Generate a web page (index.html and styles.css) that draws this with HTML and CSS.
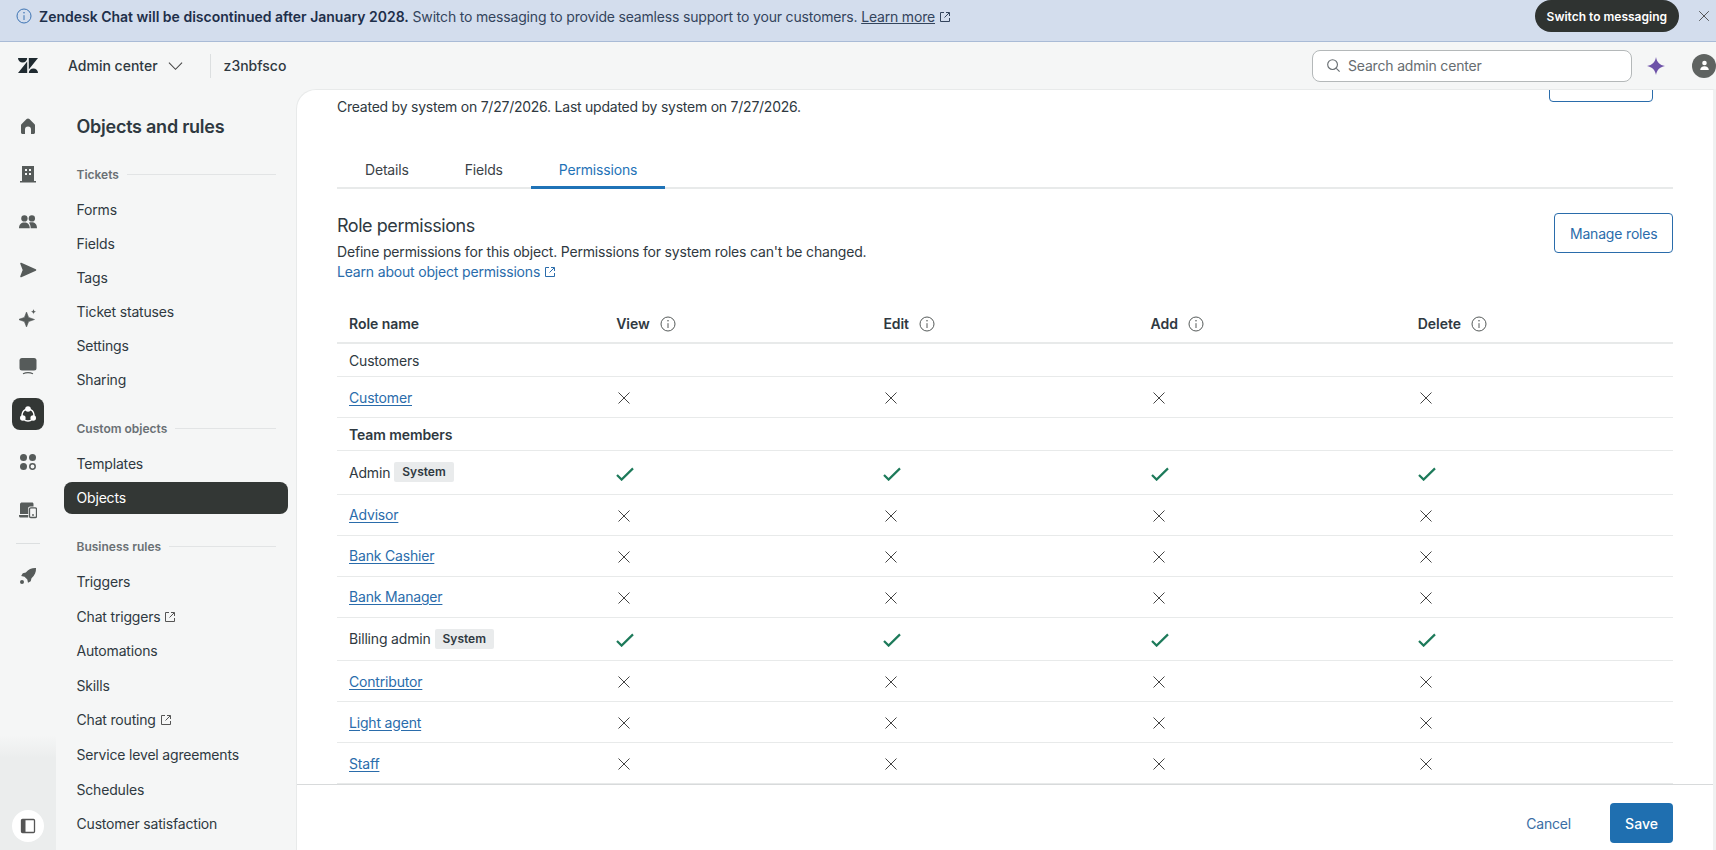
FILE: index.html
```html
<!DOCTYPE html>
<html lang="en">
<head>
  <meta charset="UTF-8" />
  <title>Objects and rules - Admin center</title>
  <link rel="stylesheet" href="styles.css">
</head>
<body>
  <svg class="sprite" aria-hidden="true">
    <symbol id="i-x" viewBox="0 0 16 16"><path d="M2.5 2.5l11 11M13.5 2.5l-11 11" fill="none" stroke="currentColor" stroke-width="1"/></symbol>
    <symbol id="i-check" viewBox="0 0 18 14"><path d="M1 8l4.6 4.6L17 1.4" fill="none" stroke="currentColor" stroke-width="2.2"/></symbol>
    <symbol id="i-info" viewBox="0 0 16 16"><circle cx="8" cy="8" r="7" fill="none" stroke="currentColor" stroke-width="1"/><path d="M8 7.2V12" stroke="currentColor" stroke-width="1"/><circle cx="8" cy="4.7" r=".8" fill="currentColor"/></symbol>
    <symbol id="i-ext" viewBox="0 0 12 12"><path d="M5 1.5H1.5v9h9V7M7 1.5h3.5V5M10.2 1.8L5.5 6.5" fill="none" stroke="currentColor" stroke-width="1"/></symbol>
  </svg>

  <div class="banner">
    <svg class="banner-info"><use href="#i-info"/></svg>
    <div class="banner-text"><b>Zendesk Chat will be discontinued after January 2028.</b> Switch to messaging to provide seamless support to your customers. <a href="#">Learn more</a> <svg class="ext"><use href="#i-ext"/></svg></div>
    <button class="switch-button">Switch to messaging</button>
    <svg class="banner-close"><use href="#i-x"/></svg>
  </div>

  <header class="topbar">
    <svg class="logo" viewBox="0 0 20 15"><path d="M0 0h9.2a4.6 4.6 0 0 1-9.2 0zM9.2 3.6V15H0zM10.8 0H20l-9.2 11.4zM10.8 15a4.6 4.6 0 0 1 9.2 0z"/></svg>
    <span class="product">Admin center</span>
    <svg class="chevron" viewBox="0 0 16 10"><path d="M1 1.5l7 7 7-7" fill="none" stroke="currentColor" stroke-width="1.1"/></svg>
    <span class="top-divider"></span>
    <span class="subdomain">z3nbfsco</span>
    <div class="search">
      <svg viewBox="0 0 16 16"><circle cx="7" cy="7" r="5.2" fill="none" stroke="currentColor" stroke-width="1.2"/><path d="M11 11l3.5 3.5" stroke="currentColor" stroke-width="1.2"/></svg>
      <span>Search admin center</span>
    </div>
    <svg class="spark" viewBox="0 0 18 18"><path d="M9 0c.8 5 3.6 8 9 9-5.4 1-8.2 4-9 9-.8-5-3.6-8-9-9 5.4-1 8.2-4 9-9z"/></svg>
    <span class="avatar"><svg viewBox="0 0 12 12"><circle cx="6" cy="3.3" r="2.5"/><path d="M1.3 11c0-3 2-4.3 4.7-4.3s4.700 1.300 4.700 4.300z"/></svg></span>
  </header>

  <div class="body">
    <nav class="rail">
      <a class="rail-item"><svg viewBox="0 0 18 18"><path d="M9 1.5c.5 0 1 .2 1.400.6l5.200 5.200c.3.300.4.700.4 1.100v7c0 .8-.7 1.600-1.500 1.600h-2.500v-4.500a3 3 0 0 0-6 0V17H3.500C2.700 17 2 16.200 2 15.400v-7c0-.4.100-.8.400-1.100l5.200-5.200c.4-.4.900-.6 1.400-.6z"/></svg></a>
      <a class="rail-item"><svg viewBox="0 0 18 18"><path fill-rule="evenodd" d="M3 1h12v15h2v1.500H1V16h2zM6 4v2h2V4zm4 0v2h2V4zM6 8v2h2V8zm4 0v2h2V8z"/></svg></a>
      <a class="rail-item"><svg viewBox="0 0 20 18"><circle cx="6" cy="5" r="3.5"/><circle cx="14.3" cy="5" r="3.5"/><path d="M0 16c0-4.500 2.500-6.500 6-6.500s6 2 6 6.500zM13 16c0-2.500-.6-4.700-2-6.200 1-.3 2-.4 3-.4 3.500 0 6 2 6 6.600z"/></svg></a>
      <a class="rail-item"><svg viewBox="0 0 18 18"><path d="M2 2.5L16.500 9 2 15.500 4.500 9z" stroke="currentColor" stroke-width="1.6" stroke-linejoin="round"/></svg></a>
      <a class="rail-item"><svg viewBox="0 0 18 18"><path d="M7.500 3l2.100 5.400L15.500 10.500 9.600 12.600 7.500 18 5.400 12.600-.5 10.500l5.900-2.100z" stroke="currentColor" stroke-width=".6" stroke-linejoin="round"/><path d="M14.500 0c.2 1.700 1 2.500 2.700 2.700-1.700.2-2.500 1-2.700 2.700-.2-1.700-1-2.500-2.700-2.700 1.700-.2 2.500-1 2.700-2.700z"/></svg></a>
      <a class="rail-item"><svg viewBox="0 0 18 18"><rect x="0.5" y="1" width="17" height="12.5" rx="2.5"/><path d="M4 16.800c3-1.300 7-1.300 10 0" fill="none" stroke="currentColor" stroke-width="1.2"/></svg></a>
      <a class="rail-item rail-active"><svg viewBox="0 0 18 18"><circle cx="9" cy="10" r="6" fill="none" stroke="currentColor" stroke-width="1.5"/><circle cx="9" cy="4" r="2.8"/><circle cx="3.8" cy="13" r="2.8"/><circle cx="14.2" cy="13" r="2.8"/></svg></a>
      <a class="rail-item"><svg viewBox="0 0 18 18"><circle cx="4.5" cy="4.5" r="3.5"/><circle cx="13.5" cy="4.5" r="3.5"/><circle cx="4.5" cy="13.5" r="3.5"/><circle cx="13.5" cy="13.5" r="2.7" fill="none" stroke="currentColor" stroke-width="1.5"/></svg></a>
      <a class="rail-item"><svg viewBox="0 0 18 18"><path d="M3 1.500h10c1 0 1.500.6 1.500 1.500v2.500H11c-1 0-1.800.8-1.800 1.800V13H1V3c.1-.9 1-1.500 2-1.500zM0 14h9.200v2.500H1.500C.6 16.500 0 15.800 0 15z"/><rect x="10.5" y="6.8" width="7" height="9.7" rx="1.3" fill="none" stroke="currentColor" stroke-width="1.3"/><circle cx="14" cy="14" r=".9"/></svg></a>
      <span class="rail-divider"></span>
      <a class="rail-item"><svg viewBox="0 0 18 18"><path d="M17 1c.2 4-1.200 7.500-4.500 10.200l-.8 3-2.700 1.600-.7-3.300-2.800-2.800-3.300-.6L3.800 6.300l3-.8C9.500 2.200 13 .8 17 1z"/><circle cx="3" cy="15" r="2"/></svg></a>
      <div class="rail-bottom">
        <span class="rail-toggle"><svg viewBox="0 0 16 16"><path d="M2.500 1.500h11a1 1 0 0 1 1 1v11a1 1 0 0 1-1 1h-11a1 1 0 0 1-1-1v-11a1 1 0 0 1 1-1z" fill="none" stroke="currentColor" stroke-width="1.3"/><path d="M1.500 2h4v12h-4z"/></svg></span>
      </div>
    </nav>

    <aside class="sidebar">
      <h2>Objects and rules</h2>
      <div class="nav-section">Tickets</div>
      <a class="nav-item">Forms</a>
      <a class="nav-item">Fields</a>
      <a class="nav-item">Tags</a>
      <a class="nav-item">Ticket statuses</a>
      <a class="nav-item">Settings</a>
      <a class="nav-item">Sharing</a>
      <div class="nav-section">Custom objects</div>
      <a class="nav-item">Templates</a>
      <a class="nav-item active">Objects</a>
      <div class="nav-section wide">Business rules</div>
      <a class="nav-item">Triggers</a>
      <a class="nav-item">Chat triggers <svg class="ext"><use href="#i-ext"/></svg></a>
      <a class="nav-item">Automations</a>
      <a class="nav-item">Skills</a>
      <a class="nav-item">Chat routing <svg class="ext"><use href="#i-ext"/></svg></a>
      <a class="nav-item">Service level agreements</a>
      <a class="nav-item">Schedules</a>
      <a class="nav-item">Customer satisfaction</a>
    </aside>

    <main class="panel">
      <div class="scroll">
        <div class="scroll-inner">
          <div class="meta">
            <button class="outline-button ghost"></button>
            <p>Created by system on 7/27/2026. Last updated by system on 7/27/2026.</p>
          </div>
          <div class="tabs">
            <span class="tab">Details</span>
            <span class="tab">Fields</span>
            <span class="tab selected">Permissions</span>
          </div>
          <div class="section-head">
            <div>
              <h3>Role permissions</h3>
              <p>Define permissions for this object. Permissions for system roles can't be changed.</p>
              <a href="#" class="plain-link">Learn about object permissions <svg class="ext"><use href="#i-ext"/></svg></a>
            </div>
            <button class="outline-button">Manage roles</button>
          </div>

          <div class="table">
            <div class="row head">
              <div>Role name</div>
              <div>View <svg class="info"><use href="#i-info"/></svg></div>
              <div>Edit <svg class="info"><use href="#i-info"/></svg></div>
              <div>Add <svg class="info"><use href="#i-info"/></svg></div>
              <div>Delete <svg class="info"><use href="#i-info"/></svg></div>
            </div>
            <div class="row group"><div>Customers</div></div>
            <div class="row">
              <div><a href="#">Customer</a></div>
              <div><svg class="no"><use href="#i-x"/></svg></div><div><svg class="no"><use href="#i-x"/></svg></div><div><svg class="no"><use href="#i-x"/></svg></div><div><svg class="no"><use href="#i-x"/></svg></div>
            </div>
            <div class="row group"><div><b>Team members</b></div></div>
            <div class="row tall">
              <div>Admin <span class="badge">System</span></div>
              <div><svg class="yes"><use href="#i-check"/></svg></div><div><svg class="yes"><use href="#i-check"/></svg></div><div><svg class="yes"><use href="#i-check"/></svg></div><div><svg class="yes"><use href="#i-check"/></svg></div>
            </div>
            <div class="row">
              <div><a href="#">Advisor</a></div>
              <div><svg class="no"><use href="#i-x"/></svg></div><div><svg class="no"><use href="#i-x"/></svg></div><div><svg class="no"><use href="#i-x"/></svg></div><div><svg class="no"><use href="#i-x"/></svg></div>
            </div>
            <div class="row">
              <div><a href="#">Bank Cashier</a></div>
              <div><svg class="no"><use href="#i-x"/></svg></div><div><svg class="no"><use href="#i-x"/></svg></div><div><svg class="no"><use href="#i-x"/></svg></div><div><svg class="no"><use href="#i-x"/></svg></div>
            </div>
            <div class="row">
              <div><a href="#">Bank Manager</a></div>
              <div><svg class="no"><use href="#i-x"/></svg></div><div><svg class="no"><use href="#i-x"/></svg></div><div><svg class="no"><use href="#i-x"/></svg></div><div><svg class="no"><use href="#i-x"/></svg></div>
            </div>
            <div class="row tall">
              <div>Billing admin <span class="badge">System</span></div>
              <div><svg class="yes"><use href="#i-check"/></svg></div><div><svg class="yes"><use href="#i-check"/></svg></div><div><svg class="yes"><use href="#i-check"/></svg></div><div><svg class="yes"><use href="#i-check"/></svg></div>
            </div>
            <div class="row">
              <div><a href="#">Contributor</a></div>
              <div><svg class="no"><use href="#i-x"/></svg></div><div><svg class="no"><use href="#i-x"/></svg></div><div><svg class="no"><use href="#i-x"/></svg></div><div><svg class="no"><use href="#i-x"/></svg></div>
            </div>
            <div class="row">
              <div><a href="#">Light agent</a></div>
              <div><svg class="no"><use href="#i-x"/></svg></div><div><svg class="no"><use href="#i-x"/></svg></div><div><svg class="no"><use href="#i-x"/></svg></div><div><svg class="no"><use href="#i-x"/></svg></div>
            </div>
            <div class="row">
              <div><a href="#">Staff</a></div>
              <div><svg class="no"><use href="#i-x"/></svg></div><div><svg class="no"><use href="#i-x"/></svg></div><div><svg class="no"><use href="#i-x"/></svg></div><div><svg class="no"><use href="#i-x"/></svg></div>
            </div>
          </div>
        </div>
      </div>
      <footer class="footer">
        <a class="cancel">Cancel</a>
        <button class="save-button">Save</button>
      </footer>
    </main>
  </div>
</body>
</html>
```
FILE: styles.css
```css
* { box-sizing: border-box; }
body {
  margin: 0;
  height: 850px;
  overflow: hidden;
  display: flex;
  flex-direction: column;
  font-family: Inter, 'Noto Sans', sans-serif;
  font-size: 14px;
  letter-spacing: -0.18px;
  color: #2f3941;
  background: #f5f6f6;
}
a { color: #2a6cab; }
svg { display: inline-block; }
.sprite { display: none; }
.ext {
  width: 12px;
  height: 12px;
  vertical-align: -1px;
}

/* banner */
.banner {
  height: 42px;
  flex: none;
  display: flex;
  align-items: center;
  padding: 0 5px 9px 16px;
  background: #d3dded;
  border-bottom: 1px solid #a9bbd6;
  color: #33445c;
}
.banner-info {
  width: 16px;
  height: 16px;
  color: #3d74b4;
  margin-right: 7px;
}
.banner-text { flex: 1; }
.banner-text b { color: #1e2f4a; font-weight: 600; letter-spacing: 0; }
.banner-text a { color: inherit; }
.switch-button {
  height: 32px;
  padding: 0 12px;
  border: none;
  border-radius: 16px;
  background: #2f3331;
  color: #fff;
  font: 600 12px Inter, sans-serif;
}
.banner-close {
  width: 14px;
  height: 14px;
  margin-left: 18px;
  color: #444;
}

/* top bar */
.topbar {
  height: 47px;
  flex: none;
  display: flex;
  align-items: center;
  background: #f5f6f6;
}
.logo {
  width: 20px;
  height: 15px;
  margin-left: 18px;
  fill: #1f2a30;
}
.product {
  margin-left: 30px;
  font-weight: 500;
  letter-spacing: 0;
}
.chevron {
  width: 15px;
  height: 10px;
  margin-left: 10px;
  color: #444;
}
.top-divider {
  width: 1px;
  height: 24px;
  margin: 0 13px 0 27px;
  background: #dcdfe0;
}
.subdomain { font-weight: 500; letter-spacing: 0; }
.search {
  margin-left: auto;
  width: 320px;
  height: 32px;
  display: flex;
  align-items: center;
  gap: 7px;
  padding: 0 13px;
  background: #fff;
  border: 1px solid #b4b8b9;
  border-radius: 8px;
  color: #666c70;
}
.search svg { width: 15px; height: 15px; }
.spark {
  width: 18px;
  height: 18px;
  margin-left: 15px;
  fill: #6d52a8;
}
.avatar {
  width: 24px;
  height: 24px;
  margin-left: 27px;
  display: flex;
  align-items: center;
  justify-content: center;
  border-radius: 50%;
  background: #5f6361;
}
.avatar svg { width: 11px; height: 11px; fill: #fff; }

/* left rail */
.body {
  flex: 1;
  display: flex;
  min-height: 0;
}
.rail {
  width: 56px;
  flex: none;
  position: relative;
  display: flex;
  flex-direction: column;
  align-items: center;
  padding-top: 21px;
  color: #565b5a;
}
.rail-item {
  width: 32px;
  height: 32px;
  margin-bottom: 16px;
  display: flex;
  align-items: center;
  justify-content: center;
  color: inherit;
}
.rail-item svg {
  width: 18px;
  height: 18px;
  fill: currentColor;
}
.rail-active {
  background: #333735;
  border-radius: 8px;
  color: #fff;
}
.rail-divider {
  width: 24px;
  height: 1px;
  margin: 1px 0 16px;
  background: #dcdfe0;
}
.rail-bottom {
  position: absolute;
  left: 0;
  right: 0;
  bottom: 0;
  height: 115px;
  display: flex;
  align-items: flex-end;
  justify-content: center;
  padding-bottom: 8px;
  background: linear-gradient(#f5f6f6, #ebeded 20%);
}
.rail-toggle {
  width: 32px;
  height: 32px;
  display: flex;
  align-items: center;
  justify-content: center;
  border-radius: 50%;
  background: #fff;
  color: #555;
}
.rail-toggle svg { width: 16px; height: 16px; fill: currentColor; }

/* object nav */
.sidebar {
  width: 240px;
  flex: none;
  padding: 0 8px;
}
.sidebar h2 {
  margin: 27px 0 27px 12.5px;
  font-size: 18px;
  line-height: 22px;
  font-weight: 600;
  letter-spacing: -0.25px;
}
.nav-section {
  display: flex;
  align-items: center;
  gap: 8px;
  height: 18px;
  margin: 23px 0 11px 12.5px;
  font-size: 12px;
  font-weight: 600;
  color: #6a7074;
  letter-spacing: 0;
}
.sidebar h2 + .nav-section { margin-top: 0; }
.nav-section::after {
  content: '';
  flex: 1;
  height: 1px;
  background: #e2e4e5;
  margin-right: 12px;
}
.nav-item {
  display: block;
  height: 32px;
  margin-bottom: 2px;
  padding-left: 12.5px;
  line-height: 32px;
  color: #2f3941;
  border-radius: 8px;
}
.nav-section.wide ~ .nav-item { margin-bottom: 2.6px; }
.nav-item.active {
  background: #333735;
  color: #fff;
}
.nav-item .ext { color: #555; }

/* main panel */
.panel {
  flex: 1;
  min-width: 0;
  display: flex;
  flex-direction: column;
  background: #fff;
  border-top-left-radius: 20px;
  border-top: 1px solid #e8eaea;
  border-left: 1px solid #e8eaea;
  border-right: 3px solid #f0f1f1;
}
.scroll {
  flex: 1;
  min-height: 0;
  overflow: hidden;
  padding: 0 40px;
}
.scroll-inner { margin-top: -28px; }
.meta p {
  margin: -5px 0 0;
  line-height: 20px;
  letter-spacing: -0.24px;
}
.meta .ghost {
  display: block;
  width: 104px;
  margin: 0 20px 0 auto;
}
.tabs {
  display: flex;
  height: 40px;
  margin-top: 32px;
  border-bottom: 2px solid #e8eaea;
}
.tab {
  padding: 11px 28px 0;
  line-height: 20px;
  color: #3a4247;
}
.tab.selected {
  color: #1f73b7;
  border-bottom: 3px solid #1f73b7;
  height: 40px;
}
.section-head {
  display: flex;
  justify-content: space-between;
  align-items: flex-start;
  margin-top: 25px;
}
.section-head h3 {
  margin: 0 0 4px;
  font-size: 18px;
  line-height: 24px;
  font-weight: 400;
  letter-spacing: -0.45px;
}
.section-head p { margin: 0; line-height: 20px; }
.plain-link { text-decoration: none; line-height: 20px; display: block; }
.section-head .outline-button { margin-top: -1px; }
.outline-button {
  height: 40px;
  padding: 0 14.5px;
  border: 1px solid #2a6cab;
  border-radius: 4px;
  background: #fff;
  color: #2a6cab;
  font: 14px Inter, sans-serif;
  letter-spacing: -0.18px;
}
.table { margin-top: 19px; }
.row {
  display: grid;
  grid-template-columns: repeat(5, 1fr);
  height: 41px;
  align-items: center;
  border-bottom: 1px solid #e8eaea;
}
.row > div {
  padding-left: 12px;
  display: flex;
  align-items: center;
  gap: 4px;
}
.row a { text-underline-offset: 2px; }
.row.head {
  height: 43px;
  border-bottom: 2px solid #e8eaea;
  font-weight: 600;
  letter-spacing: -0.05px;
}
.row.head > div { gap: 10px; padding-top: 4px; }
.row.group { height: 33px; }
.row.group > div { grid-column: 1 / -1; }
.row.group b { font-weight: 600; letter-spacing: -0.1px; }
.row.tall { height: 43.5px; }
.info { width: 16px; height: 16px; color: #565b5a; }
.no { width: 16px; height: 16px; color: #444; margin-top: 2px; }
.yes { width: 18px; height: 14px; color: #1d7a5a; margin-top: 3px; }
.badge {
  height: 20px;
  padding: 0 8px;
  line-height: 20px;
  border-radius: 2px;
  background: #e9ebec;
  font-size: 12px;
  font-weight: 600;
  letter-spacing: 0;
}

/* footer */
.footer {
  height: 66px;
  flex: none;
  display: flex;
  align-items: center;
  justify-content: flex-end;
  gap: 39px;
  padding: 12px 40px 1px 0;
  background: #fff;
  border-top: 1px solid #d8dadb;
}
.cancel { color: #3a6ea5; }
.save-button {
  width: 63px;
  height: 40px;
  border: none;
  border-radius: 4px;
  background: #1f6fb0;
  color: #fff;
  font: 500 14px Inter, sans-serif;
}
```
